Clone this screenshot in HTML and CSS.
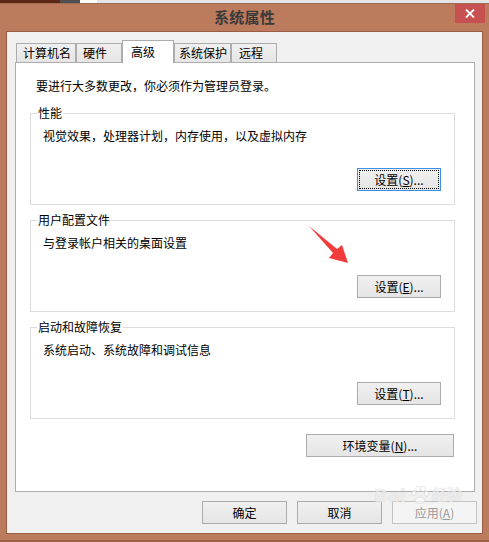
FILE: index.html
```html
<!DOCTYPE html>
<html lang="zh-CN">
<head>
<meta charset="utf-8">
<title>系统属性</title>
<link rel="stylesheet" href="styles.css">
</head>
<body>
<div class="window">
  <div class="taskstrip">
    <span class="seg seg-a"></span><span class="seg seg-b"></span><span class="seg seg-c"></span><span class="seg seg-d"></span>
  </div>
  <div class="titlebar">
    <span></span>
    <h1 class="title">系统属性</h1>
    <button class="close" aria-label="关闭">
      <svg width="10" height="9" viewBox="0 0 10 9"><path d="M1 0.5 L9 8.5 M9 0.5 L1 8.5" stroke="#fff" stroke-width="1.8" fill="none"/></svg>
    </button>
  </div>
  <div class="client">
    <div class="tabs">
      <div class="tab tab-w60">计算机名</div>
      <div class="tab tab-w46">硬件</div>
      <div class="tab tab-active">高级</div>
      <div class="tab tab-w57 tab-tight">系统保护</div>
      <div class="tab tab-w46 tab-wide">远程</div>
    </div>
    <div class="panel">
      <p class="intro">要进行大多数更改，你必须作为管理员登录。</p>
      <div class="groups">
        <section class="group">
          <div class="legend">性能</div>
          <p class="desc">视觉效果，处理器计划，内存使用，以及虚拟内存</p>
          <button class="btn btn-set btn-focus">设置(<u>S</u>)...</button>
        </section>
        <section class="group">
          <div class="legend">用户配置文件</div>
          <p class="desc">与登录帐户相关的桌面设置</p>
          <button class="btn btn-set">设置(<u>E</u>)...</button>
        </section>
        <section class="group">
          <div class="legend">启动和故障恢复</div>
          <p class="desc">系统启动、系统故障和调试信息</p>
          <button class="btn btn-set">设置(<u>T</u>)...</button>
        </section>
      </div>
      <div class="env-row">
        <button class="btn btn-env">环境变量(<u>N</u>)...</button>
      </div>
    </div>
    <div class="footer">
      <button class="btn btn-foot">确定</button>
      <button class="btn btn-foot">取消</button>
      <button class="btn btn-foot btn-disabled">应用(<u>A</u>)</button>
    </div>
  </div>
  <svg class="arrow" width="52" height="48" viewBox="300 220 52 48">
    <polygon points="309,226 337,249 342,245 348,263 329,258 333,253" fill="#f23b3b"/>
  </svg>
  <div class="watermark">
    <span class="wm-bai">Bai</span>
    <svg class="wm-paw" width="20" height="18" viewBox="0 0 20 18">
      <g fill="rgba(255,255,255,0.6)" stroke="rgba(170,170,170,0.35)" stroke-width="0.8">
        <ellipse cx="4" cy="7" rx="2.2" ry="2.8"/>
        <ellipse cx="8" cy="3" rx="2.2" ry="2.8"/>
        <ellipse cx="13" cy="3" rx="2.2" ry="2.8"/>
        <ellipse cx="16.5" cy="7.5" rx="2.2" ry="2.8"/>
        <path d="M5 15 C5 10 15 10 15 15 C15 18 5 18 5 15 Z"/>
      </g>
    </svg>
    <span class="wm-jy">经验</span>
  </div>
</div>
</body>
</html>
```
FILE: styles.css
```css
* { box-sizing: border-box; }
html, body { margin: 0; padding: 0; }
body {
  width: 489px;
  height: 542px;
  overflow: hidden;
  background: #bc7b5c;
  font-family: "Noto Sans CJK SC", "Noto Sans", sans-serif;
  font-size: 12px;
  color: #000;
}
.window {
  position: relative;
  width: 489px;
  height: 542px;
  background: #bc7b5c;
  border-bottom: 2px solid #9c6246;
}
.taskstrip {
  display: flex;
  height: 4px;
  border-bottom: 1px solid #a26a4f;
}
.seg { display: block; height: 3px; }
.seg-a { width: 60px; background: #5e2614; }
.seg-b { width: 20px; background: #4e4e4e; }
.seg-c { width: 17px; background: #ffffff; }
.seg-d { flex: 1; background: #e4e4e4; }

.titlebar {
  display: grid;
  grid-template-columns: 1fr auto 1fr;
  height: 28px;
}
.title {
  margin: 0;
  font-size: 15px;
  font-weight: 700;
  line-height: 26px;
  color: #3a3a3a;
  letter-spacing: 0.3px;
}
.close {
  justify-self: end;
  align-self: start;
  width: 30px;
  height: 19px;
  margin-right: 4px;
  padding: 0;
  border: 0;
  background: #c75050;
  display: flex;
  align-items: center;
  justify-content: center;
}

.client {
  width: 475px;
  height: 501px;
  margin-left: 7px;
  padding-top: 8px;
  background: #f0f0f0;
  box-shadow: 0 0 0 1px #985d42;
}
.tabs {
  display: flex;
  align-items: flex-end;
  height: 22px;
  padding-left: 9px;
  position: relative;
  z-index: 1;
}
.tab {
  height: 19px;
  padding: 1px 0 0 6px;
  line-height: 16px;
  border: 1px solid #acacac;
  border-bottom: 0;
  background: linear-gradient(#f0f0f0, #e5e5e5);
  white-space: nowrap;
}
.tab-w60 { width: 60px; }
.tab-w46 { width: 46px; }
.tab-w57 { width: 57px; }
.tab-tight { padding-left: 4px; }
.tab-wide { padding-left: 7px; }
.tab-active {
  width: 52px;
  height: 23px;
  margin-bottom: -1px;
  padding: 3px 0 0 8px;
  background: #fff;
}

.panel {
  width: 460px;
  height: 430px;
  margin-left: 8px;
  padding-top: 15px;
  border: 1px solid #adadad;
  background: #fff;
}
.intro {
  margin: 0;
  padding-left: 20px;
  line-height: 16px;
}
.groups {
  display: flex;
  flex-direction: column;
  gap: 15px;
  width: 425px;
  margin: 19px 0 0 14px;
}
.group {
  display: flex;
  flex-direction: column;
  height: 92px;
  padding: 0 13px 13px 12px;
  border: 1px solid #dcdcdc;
}
.legend {
  align-self: flex-start;
  margin: -9px 0 0 -6px;
  padding: 0 1px;
  line-height: 16px;
  background: #fff;
}
.desc {
  margin: 7px 0 0 0;
  line-height: 16px;
}

.btn {
  height: 23px;
  padding: 0;
  border: 1px solid #acacac;
  background: linear-gradient(#f0f0f0, #e5e5e5);
  font-family: "Noto Sans CJK SC", "Noto Sans", sans-serif;
  font-size: 12px;
  line-height: 20px;
  color: #000;
  text-align: center;
}
.btn u { text-underline-offset: 1px; }
.btn-set {
  width: 84px;
  margin-top: auto;
  align-self: flex-end;
}
.btn-focus {
  border-color: #3c8de6;
  outline: 1px dotted #000;
  outline-offset: -3px;
}
.env-row {
  display: flex;
  justify-content: flex-end;
  margin-top: 15px;
  padding-right: 20px;
}
.btn-env { width: 148px; }

.footer {
  display: flex;
  justify-content: flex-end;
  gap: 10px;
  margin-top: 9px;
  padding-right: 5px;
}
.btn-foot { width: 85px; }
.btn-disabled {
  color: #9a9a9a;
  border-color: #c4c4c4;
  background: #f4f4f4;
}

.arrow {
  position: absolute;
  left: 300px;
  top: 220px;
}

.watermark {
  position: absolute;
  left: 374px;
  top: 484px;
  width: 100px;
  height: 20px;
  pointer-events: none;
  color: rgba(255, 255, 255, 0.6);
  text-shadow: 0 0 1px rgba(150, 150, 150, 0.4);
  font-family: "DejaVu Sans", sans-serif;
  font-weight: bold;
}
.wm-bai { position: absolute; left: 0; top: 2px; font-size: 18px; line-height: 20px; }
.wm-paw { position: absolute; left: 36px; top: 2px; }
.wm-jy { position: absolute; left: 58px; top: 1px; font-size: 15px; line-height: 18px; font-family: "Noto Sans CJK SC", sans-serif; }
```
